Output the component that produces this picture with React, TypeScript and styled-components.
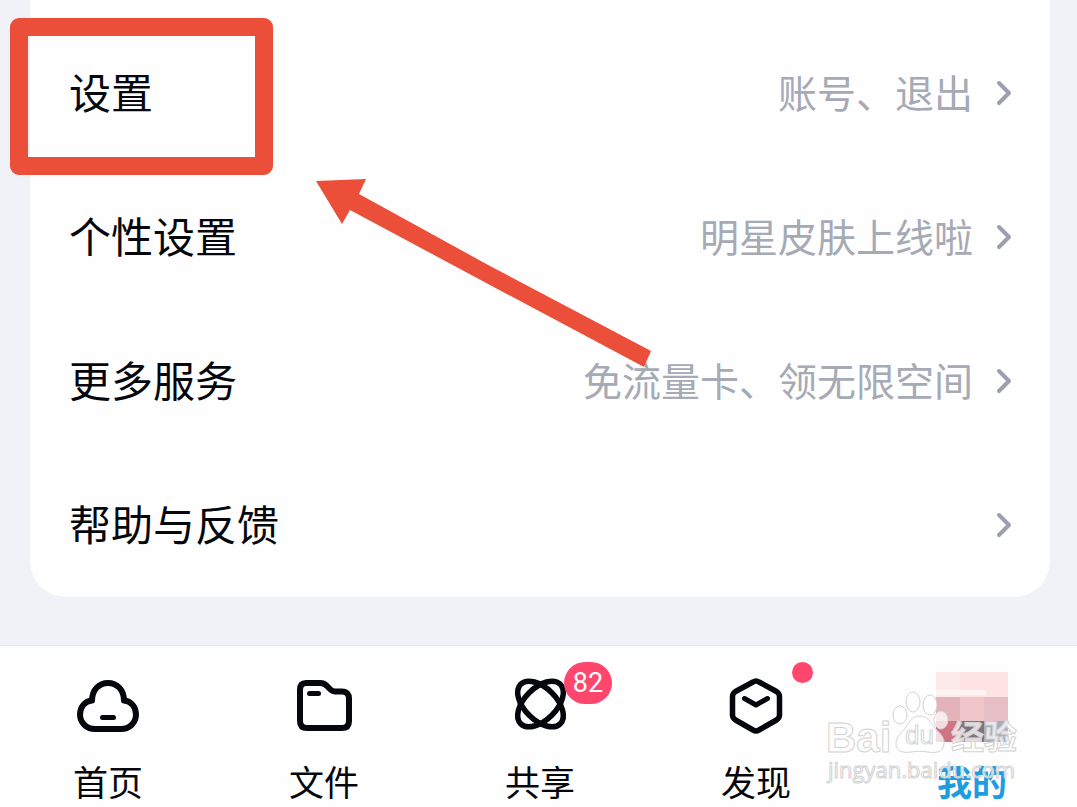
import React from 'react';
import styled, { createGlobalStyle } from 'styled-components';

const GlobalStyle = createGlobalStyle`
  * { box-sizing: border-box; }
  html, body, #root { height: 100%; }
  body {
    margin: 0;
    background: #f1f2f7;
    color: #05070d;
    font-family: "Noto Sans CJK SC", sans-serif;
  }
`;

const Screen = styled.div`
  position: relative;
  min-height: 100%;
  display: flex;
  flex-direction: column;
  justify-content: space-between;
  overflow: hidden;
`;

const Card = styled.main`
  margin: 0 27px 48px 30px;
  padding-top: 21px;
  background: #fefefe;
  border-radius: 0 0 36px 36px;
`;

const List = styled.ul`
  list-style: none;
  margin: 0;
  padding: 0;
`;

const Item = styled.li`
  position: relative;
`;

const Row = styled.button`
  display: flex;
  align-items: center;
  width: 100%;
  height: 144px;
  padding: 0 37px 0 39px;
  border: 0;
  background: none;
  color: inherit;
  font: inherit;
  text-align: left;
  cursor: pointer;
`;

const RowTitle = styled.span`
  flex: 1;
  padding-bottom: 4px;
  font-size: 42px;
  line-height: 60px;
`;

const RowHint = styled.span`
  padding-bottom: 4px;
  font-size: 39px;
  line-height: 60px;
  color: #a6aab5;
  margin-right: 22px;
`;

const Chevron = styled.svg`
  width: 18px;
  height: 28px;
  flex: none;
`;

const Highlight = styled.div`
  position: absolute;
  left: -20px;
  top: -3px;
  width: 263px;
  height: 157px;
  border-radius: 9px;
  border: 18px solid #eb4e39;
  pointer-events: none;
`;

const Arrow = styled.svg`
  position: absolute;
  left: 310px;
  top: 172px;
  width: 350px;
  height: 200px;
  pointer-events: none;
`;

const TabBar = styled.nav`
  position: relative;
  display: flex;
  height: 162px;
  margin-right: -3px;
  background: #fefefe;
  border-top: 1px solid #e6e7ea;
`;

const Tab = styled.a<{ $active?: boolean }>`
  flex: 1;
  display: flex;
  flex-direction: column;
  align-items: center;
  padding-top: 24px;
  color: ${p => (p.$active ? '#1d9ce0' : '#05070d')};
  font-size: 35px;
  line-height: 52px;
  font-weight: ${p => (p.$active ? 700 : 400)};
  text-decoration: none;
`;

const IconBox = styled.span`
  position: relative;
  width: 72px;
  height: 72px;
  margin-bottom: 13px;
  svg { display: block; }
`;

const Badge = styled.span`
  position: absolute;
  left: 60px;
  top: -8px;
  width: 48px;
  height: 42px;
  border-radius: 21px;
  background: #ff476d;
  color: #fff;
  font-family: Roboto, sans-serif;
  font-size: 27px;
  font-weight: 400;
  line-height: 43px;
  text-align: center;
`;

const Dot = styled.span`
  position: absolute;
  left: 72px;
  top: -8px;
  width: 21px;
  height: 21px;
  border-radius: 50%;
  background: #ff476d;
`;

const Watermark = styled.svg`
  position: absolute;
  right: 53px;
  bottom: 17px;
  width: 207px;
  height: 110px;
  pointer-events: none;
`;

const stroke = {
  fill: 'none',
  stroke: '#05070d',
  strokeWidth: 6,
  strokeLinecap: 'round' as const,
  strokeLinejoin: 'round' as const,
};

const CloudIcon = () => (
  <svg width="72" height="72" viewBox="0 0 72 72" {...stroke}>
    <path d="M20 30.500C20 20 27 13 36 13S52 20 52 30.500C59 31 64 37 64 44.500C64 53 57 59 49 59H23C15 59 8 53 8 44.500C8 37 13 31 20 30.500Z" />
    <path d="M30.500 47.500H41.500" strokeWidth="5" />
  </svg>
);

const FolderIcon = () => (
  <svg width="72" height="72" viewBox="0 0 72 72" {...stroke}>
    <path d="M18 13H32C36 13 38 14.500 40 17C42 19.500 44 21.500 47 21.500H54C59 21.500 61 24.500 61 28.500V51C61 55.500 59 58 54 58H19C14 58 12 55.500 12 51V20C12 15.500 14 13 18 13Z" />
    <path d="M21.500 23.500H30.500" strokeWidth="5" />
  </svg>
);

const ShareIcon = () => (
  <svg width="72" height="72" viewBox="0 0 72 72" {...stroke} strokeWidth="5.500">
    <ellipse cx="36.500" cy="34" rx="28" ry="16" transform="rotate(45 36.500 34)" />
    <ellipse cx="36.500" cy="34" rx="28" ry="16" transform="rotate(-45 36.500 34)" />
  </svg>
);

const DiscoverIcon = () => (
  <svg width="72" height="72" viewBox="0 0 72 72" {...stroke} strokeWidth="5.500">
    <path d="M33 12Q36 10 39 12L56.500 21.500Q59.500 23.500 59.500 26.500V45Q59.500 48 56.500 50L39 60Q36 62 33 60L15.500 50Q12.500 48 12.500 45V26.500Q12.500 23.500 15.500 21.500Z" />
    <path d="M24.500 28.500L36 35L47.500 28.500" strokeWidth="5" />
  </svg>
);

const Avatar = () => (
  <svg width="72" height="72" viewBox="0 0 72 72">
    <rect y="2" width="72" height="25" fill="#fdeaea" />
    <rect x="24" y="2" width="48" height="25" fill="#fde3e4" />
    <rect y="20" width="50" height="5" fill="#fff3f1" />
    <rect y="27" width="24" height="24" fill="#e4b3ba" />
    <rect x="24" y="27" width="24" height="24" fill="#efc5c9" />
    <rect x="48" y="27" width="24" height="24" fill="#e8bec6" />
    <path d="M16 72Q36 80 56 72Z" fill="#3f4a66" />
    <rect y="51" width="24" height="21" fill="#cf7482" />
    <rect x="24" y="51" width="24" height="21" fill="#82727f" />
    <rect x="48" y="51" width="24" height="21" fill="#a9adb9" />
  </svg>
);

const rows = [
  { title: '设置', hint: '账号、退出', marked: true },
  { title: '个性设置', hint: '明星皮肤上线啦' },
  { title: '更多服务', hint: '免流量卡、领无限空间' },
  { title: '帮助与反馈', hint: '' },
];

export default function App() {
  return (
    <>
      <GlobalStyle />
      <Screen>
        <Card>
          <List>
            {rows.map(r => (
              <Item key={r.title}>
                <Row type="button">
                  <RowTitle>{r.title}</RowTitle>
                  {r.hint && <RowHint>{r.hint}</RowHint>}
                  <Chevron viewBox="0 0 18 28" fill="none" stroke="#9b9fae" strokeWidth="4" strokeLinecap="round" strokeLinejoin="round">
                    <path d="M4 4L14 14L4 24" />
                  </Chevron>
                </Row>
                {r.marked && <Highlight />}
              </Item>
            ))}
          </List>
        </Card>
        <Arrow viewBox="310 172 350 200" aria-hidden="true">
          <path d="M316 181L366 179L359 194L490 266L651 351L644 367L490 285L350 210L342 224Z" fill="#eb4e39" />
        </Arrow>
        <TabBar>
          <Tab href="#home"><IconBox><CloudIcon /></IconBox>首页</Tab>
          <Tab href="#files"><IconBox><FolderIcon /></IconBox>文件</Tab>
          <Tab href="#share"><IconBox><ShareIcon /><Badge>82</Badge></IconBox>共享</Tab>
          <Tab href="#discover"><IconBox><DiscoverIcon /><Dot /></IconBox>发现</Tab>
          <Tab href="#me" $active><IconBox><Avatar /></IconBox>我的</Tab>
          <Watermark viewBox="820 680 207 110" aria-hidden="true">
            <g fill="#ffffff" fillOpacity="0.75" stroke="#d2d2d2" strokeWidth="1" strokeLinejoin="round">
              <text x="826" y="752" fontFamily="Liberation Sans, sans-serif" fontSize="42" fontWeight="700">Bai</text>
              <ellipse cx="913" cy="702" rx="7" ry="10" />
              <ellipse cx="930" cy="705" rx="7" ry="10" />
              <ellipse cx="900" cy="715" rx="7" ry="9" />
              <ellipse cx="941" cy="720" rx="7" ry="9" />
              <path d="M920 716C927 716 930 721 934 727C938 732 945 736 944 744C943 753 935 753 928 752C922 751 917 751 911 752C904 753 896 752 896 744C896 736 902 733 906 727C910 721 913 716 920 716Z" />
              <text x="905" y="744" fontFamily="Liberation Sans, sans-serif" fontSize="26">du</text>
              <text x="951" y="749" fontFamily="Noto Sans CJK SC, sans-serif" fontSize="33" fontWeight="700">经验</text>
              <text x="828" y="778" fontFamily="Open Sans, sans-serif" fontSize="22">jingyan.baidu.com</text>
            </g>
          </Watermark>
        </TabBar>
      </Screen>
    </>
  );
}
